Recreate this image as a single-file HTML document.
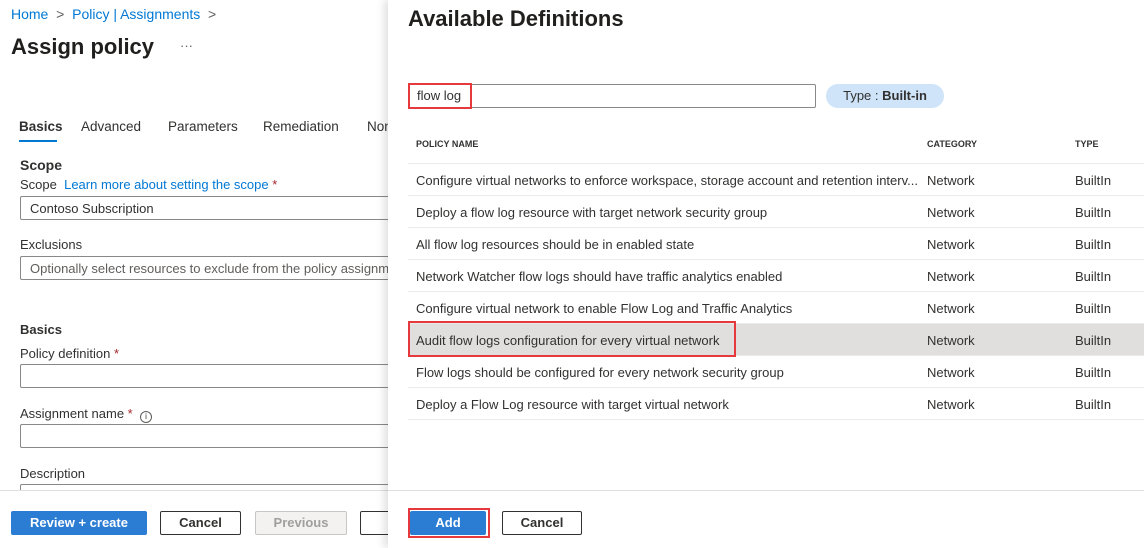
<!DOCTYPE html>
<html><head><style>
*{margin:0;padding:0;box-sizing:border-box}
body{width:1144px;height:548px;overflow:hidden;background:#fff;font-family:"Liberation Sans",sans-serif;color:#323130;position:relative;font-size:13px}
.a{position:absolute;white-space:nowrap}
.link{color:#0078d4}
.in{position:absolute;border:1px solid #8a8886;border-radius:2px;height:24px;background:#fff;white-space:nowrap;overflow:hidden}
.btn{position:absolute;height:24px;border:1px solid #323130;border-radius:2px;text-align:center;line-height:22px;font-size:13px;font-weight:bold;background:#fff}
.req{color:#a4262c}
.row{position:absolute;left:408px;width:736px;height:32px;border-bottom:1px solid #edebe9;font-size:13px}
.row span{position:absolute;top:9px;white-space:nowrap}
</style></head><body>
<div class="a" style="left:11px;top:6px;font-size:14px"><span class="link">Home</span> <span style="color:#605e5c">&nbsp;&gt;&nbsp;</span> <span class="link">Policy | Assignments</span> <span style="color:#605e5c">&nbsp;&gt;</span></div>
<div class="a" style="left:11px;top:34px;font-size:22px;font-weight:bold;color:#201f1e">Assign policy</div>
<div class="a" style="left:180px;top:38px;font-size:13px;color:#605e5c">···</div>
<div class="a" style="left:19px;top:119px;font-size:13.5px;font-weight:bold;color:#323130">Basics</div>
<div class="a" style="left:19px;top:140px;width:38px;height:2px;background:#0078d4"></div>
<div class="a" style="left:81px;top:119px;font-size:13.5px">Advanced</div>
<div class="a" style="left:168px;top:119px;font-size:13.5px">Parameters</div>
<div class="a" style="left:263px;top:119px;font-size:13.5px">Remediation</div>
<div class="a" style="left:367px;top:119px;font-size:13.5px">Non</div>
<div class="a" style="left:20px;top:157px;font-size:14px;font-weight:bold">Scope</div>
<div class="a" style="left:20px;top:177px">Scope &nbsp;<span class="link">Learn more about setting the scope</span> <span class="req">*</span></div>
<div class="in" style="left:20px;top:196px;width:380px;padding:4px 9px">Contoso Subscription</div>
<div class="a" style="left:20px;top:237px">Exclusions</div>
<div class="in" style="left:20px;top:256px;width:380px;padding:4px 9px;color:#605e5c">Optionally select resources to exclude from the policy assignment</div>
<div class="a" style="left:20px;top:322px;font-size:13px;font-weight:bold">Basics</div>
<div class="a" style="left:20px;top:346px">Policy definition <span class="req">*</span></div>
<div class="in" style="left:20px;top:364px;width:380px"></div>
<div class="a" style="left:20px;top:406px">Assignment name <span class="req">*</span> &nbsp;<span style="display:inline-block;width:12px;height:12px;border:1px solid #605e5c;border-radius:50%;font-size:8px;text-align:center;line-height:10px;vertical-align:-1px">i</span></div>
<div class="in" style="left:20px;top:424px;width:380px"></div>
<div class="a" style="left:20px;top:466px">Description</div>
<div class="in" style="left:20px;top:484px;width:380px"></div>
<div class="a" style="left:0;top:490px;width:1144px;height:58px;background:#fff;border-top:1px solid #e1dfdd"></div>
<div class="btn" style="left:11px;top:511px;width:136px;background:#2b7cd3;border-color:#2b7cd3;color:#fff">Review + create</div>
<div class="btn" style="left:160px;top:511px;width:81px">Cancel</div>
<div class="btn" style="left:255px;top:511px;width:92px;background:#f3f2f1;border-color:#c8c6c4;color:#a19f9d">Previous</div>
<div class="btn" style="left:360px;top:511px;width:60px"></div>
<!-- panel -->
<div class="a" style="left:388px;top:0;width:756px;height:548px;background:#fff;box-shadow:-4px 0 8px rgba(0,0,0,0.12)"></div>
<div class="a" style="left:388px;top:490px;width:756px;height:1px;background:#e1dfdd"></div>
<div class="a" style="left:408px;top:6px;font-size:22px;font-weight:bold;color:#201f1e">Available Definitions</div>
<div class="in" style="left:408px;top:84px;width:408px;padding:3px 8px">flow log</div>
<div class="a" style="left:408px;top:83px;width:64px;height:26px;border:2px solid #e5393e"></div>
<div class="a" style="left:826px;top:84px;width:118px;height:24px;border-radius:12px;background:#cfe4f8;text-align:center;line-height:24px">Type : <b>Built-in</b></div>
<div class="row" style="top:131px;height:33px;font-size:9px;font-weight:bold"><span style="left:8px;top:8px">POLICY NAME</span><span style="left:519px;top:8px">CATEGORY</span><span style="left:667px;top:8px">TYPE</span></div>
<div class="row" style="top:164px"><span style="left:8px">Configure virtual networks to enforce workspace, storage account and retention interv...</span><span style="left:519px">Network</span><span style="left:667px">BuiltIn</span></div>
<div class="row" style="top:196px"><span style="left:8px">Deploy a flow log resource with target network security group</span><span style="left:519px">Network</span><span style="left:667px">BuiltIn</span></div>
<div class="row" style="top:228px"><span style="left:8px">All flow log resources should be in enabled state</span><span style="left:519px">Network</span><span style="left:667px">BuiltIn</span></div>
<div class="row" style="top:260px"><span style="left:8px">Network Watcher flow logs should have traffic analytics enabled</span><span style="left:519px">Network</span><span style="left:667px">BuiltIn</span></div>
<div class="row" style="top:292px"><span style="left:8px">Configure virtual network to enable Flow Log and Traffic Analytics</span><span style="left:519px">Network</span><span style="left:667px">BuiltIn</span></div>
<div class="row" style="top:324px;background:#e1dfdd"><span style="left:8px">Audit flow logs configuration for every virtual network</span><span style="left:519px">Network</span><span style="left:667px">BuiltIn</span></div>
<div class="row" style="top:356px"><span style="left:8px">Flow logs should be configured for every network security group</span><span style="left:519px">Network</span><span style="left:667px">BuiltIn</span></div>
<div class="row" style="top:388px"><span style="left:8px">Deploy a Flow Log resource with target virtual network</span><span style="left:519px">Network</span><span style="left:667px">BuiltIn</span></div>
<div class="a" style="left:408px;top:321px;width:328px;height:36px;border:2px solid #e5393e"></div>
<div class="btn" style="left:410px;top:511px;width:76px;background:#2b7cd3;border-color:#2b7cd3;color:#fff">Add</div>
<div class="a" style="left:408px;top:508px;width:82px;height:30px;border:2px solid #e5393e"></div>
<div class="btn" style="left:502px;top:511px;width:80px">Cancel</div>
</body></html>
